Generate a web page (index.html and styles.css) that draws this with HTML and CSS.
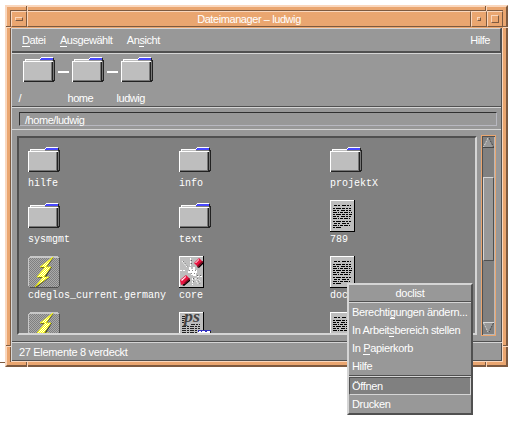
FILE: index.html
```html
<!DOCTYPE html>
<html lang="de">
<head>
<meta charset="utf-8">
<title>Dateimanager – ludwig</title>
<link rel="stylesheet" href="styles.css">
</head>
<body>
<svg class="defs" aria-hidden="true">
  <defs>
    <pattern id="dither" width="2" height="2" patternUnits="userSpaceOnUse">
      <path fill="#a9a9a9" d="M0 0h2v2H0z"/><path fill="#808080" d="M0 0h1v1H0zM1 1h1v1H1z"/>
    </pattern>
    <pattern id="spark" width="2" height="2" patternUnits="userSpaceOnUse">
      <path fill="#ffff00" d="M0 0h2v2H0z"/><path fill="#fff" d="M0 0h1v1H0zM1 1h1v1H1z"/>
    </pattern>
    <symbol id="folder" viewBox="0 0 32 25">
      <path fill="#222" d="M30 3h2v21h-1v1H1v-1h29z"/>
      <path fill="#777" d="M29 3h1v21h-1zM30 4h1v19h-1z"/>
      <path fill="#bebebe" d="M2 3h15v1H2zM1 5h28v18H1z"/>
      <path fill="#4848ff" d="M18 1h12v2H17v-1h1z"/>
      <path fill="#222" d="M30 1h1v2h-1z"/>
      <path fill="#fff" d="M18 0h12v1H18zM17 1h1v1h-1zM2 2h15v1H2zM2 3h1v1H2zM0 4h30v1H0zM0 5h1v20H0z"/>
      <path fill="#777" d="M28 5h1v19h-1zM1 23h28v1H1z"/>
      <path fill="#222" d="M29 5h1v20h-1zM1 24h29v1H1z"/>
    </symbol>
    <symbol id="doc" viewBox="0 0 25 32">
      <path fill="#000" d="M0 0h25v32H0z"/><path fill="#fff" d="M0 0h24v31H0z"/><path fill="#bebebe" d="M1 1h23v30H1z"/>
      <g stroke="#000" stroke-width="1">
        <path stroke-dasharray="3 1 2 2 4 1 2 1" d="M4 5.500h17M3 10.500h18M3 16.500h18M4 23.500h16"/>
        <path stroke-dasharray="2 1 5 1 3 1" d="M3 8.500h18M3 14.500h19M3 21.500h18M3 27.500h8"/>
        <path stroke-dasharray="4 1 1 1 3 1" d="M3 12.500h19M3 18.500h17M3 25.500h17"/>
      </g>
    </symbol>
    <symbol id="bolt" viewBox="0 0 32 32">
      <path fill="#505050" d="M2 1h29v1h1v28h-1v1h-1v1H2v-1H1V2h1z"/>
      <path fill="#c8c8c8" d="M2 0h28v1h1v1H1v28H0V2h1V1h1z"/>
      <path fill="url(#dither)" d="M1 2h30v28h-1v1H1z"/>
      <path fill="#333" d="M26 1l-7 10h5l-6 10h4L9 31h-2l8-9h-5l6-10h-4z"/>
      <path fill="url(#spark)" stroke="#ffff00" stroke-width=".6" d="M25 1L12 11h5L9 21h6L7 31l14-10h-5l7-10h-5z"/>
    </symbol>
    <symbol id="core" viewBox="0 0 25 32">
      <path fill="#000" d="M0 0h25v32H0z"/><path fill="#fff" d="M0 0h24v31H0z"/><path fill="#bebebe" d="M1 1h23v30H1z"/>
      <path stroke="#fff" stroke-dasharray="2 1" d="M11.500 2v8M3 5l5 6M1 14.500h6M18 20.500h5M17 22l5 4M13.500 22v7M16 22l3 6"/>
      <path stroke="#666" stroke-dasharray="1 2" d="M4 5l5 6M12.500 4v5M18 19.500h5M14.500 22v6M18 22l3 6"/>
      <path fill="#fff" d="M10 11h2v2h2v-2h2v3h2v3h-1v3h-3v-1h-2v-2H9v-2h2v-1h-1z"/>
      <path stroke="#888" stroke-dasharray="1 2" d="M10 14.500h7M12 17.500h5"/>
      <path fill="#000" d="M18 11l6-6v3l-4 4zM3 29l8-6v2l-6 5z"/>
      <path fill="#e8133f" d="M15 7l5-5 4 4-5 5zM1 24l6-5 4 4-6 5-3 1z"/>
      <path fill="#fff" d="M16 7l4-4v1l-3 3zM2 24l5-4v1l-4 4z"/>
      <path fill="#7a0c20" d="M18 10l5-5 1 1-5 5zM5 27l5-5 1 1-5 5z"/>
    </symbol>
    <symbol id="ps" viewBox="0 0 33 32">
      <path fill="#000" d="M0 0h25v32H0z"/><path fill="#fff" d="M0 0h24v31H0z"/><path fill="#bebebe" d="M1 1h23v30H1z"/>
      <path stroke="#222" stroke-dasharray="4 1 2 1" d="M3 4.500h3M3 6.500h3M3 8.500h2M3 10.500h2M12 12.500h9M3 14.500h18M3 16.500h18M3 18.500h16M3 20.500h15"/>
      <text x="5" y="10" class="ps-mark" textLength="16" lengthAdjust="spacingAndGlyphs">ps</text>
      <path fill="#3030c0" d="M19 18h13v4H19z"/><path fill="#fff" d="M20 19h2v1h-2zM23 19h3v1h-3zM28 19h3v1h-3zM19 20h12v2H19z"/><path fill="#222" d="M31 19h1v3h-1z"/>
    </symbol>
  </defs>
</svg>

<div class="desktop">
  <div class="window">
    <header class="titlebar">
      <div class="tbtn"><i class="bar"></i></div>
      <h1>Dateimanager – ludwig</h1>
      <div class="tbtn"><i class="dot"></i></div>
      <div class="tbtn"><i class="box"></i></div>
    </header>
    <main class="client">
      <nav class="menubar">
        <span><u>D</u>atei</span><span><u>A</u>usgewählt</span><span>An<u>s</u>icht</span><span class="help">Hilfe</span>
      </nav>
      <section class="path">
        <div class="node"><svg class="folder"><use href="#folder"/></svg><span>/</span></div>
        <div class="node"><svg class="folder"><use href="#folder"/></svg><span>home</span></div>
        <div class="node"><svg class="folder"><use href="#folder"/></svg><span>ludwig</span></div>
      </section>
      <section class="address"><div class="field">/home/ludwig</div></section>
      <section class="body">
        <div class="files">
          <div class="file"><svg class="folder"><use href="#folder"/></svg><span>hilfe</span></div>
          <div class="file"><svg class="folder"><use href="#folder"/></svg><span>info</span></div>
          <div class="file"><svg class="folder"><use href="#folder"/></svg><span>projektX</span></div>
          <div class="file"><svg class="folder"><use href="#folder"/></svg><span>sysmgmt</span></div>
          <div class="file"><svg class="folder"><use href="#folder"/></svg><span>text</span></div>
          <div class="file"><svg class="sheet"><use href="#doc"/></svg><span>789</span></div>
          <div class="file"><svg class="tile"><use href="#bolt"/></svg><span>cdeglos_current.germany</span></div>
          <div class="file"><svg class="sheet"><use href="#core"/></svg><span>core</span></div>
          <div class="file"><svg class="sheet"><use href="#doc"/></svg><span>doclist</span></div>
          <div class="file"><svg class="tile"><use href="#bolt"/></svg></div>
          <div class="file"><svg class="wide"><use href="#ps"/></svg></div>
          <div class="file"><svg class="sheet"><use href="#doc"/></svg></div>
        </div>
        <div class="scroll">
          <svg class="arrow" viewBox="0 0 11 11"><path fill="#989898" d="M5.500 0L11 11H0z"/><path stroke="#d8d8d8" stroke-dasharray="2 1" d="M5 1L.5 10"/><path stroke="#444" stroke-dasharray="2 1" d="M6 1l4.500 9"/><path stroke="#444" d="M0 10.500h11"/></svg>
          <div class="thumb"></div>
          <svg class="arrow" viewBox="0 0 11 11"><path fill="#989898" d="M0 0h11L5.500 11z"/><path stroke="#d8d8d8" stroke-dasharray="2 1" d="M.5 1L5 10"/><path stroke="#444" stroke-dasharray="2 1" d="M10.500 1L6 10"/><path stroke="#d8d8d8" d="M0 .5h11"/></svg>
        </div>
      </section>
      <footer class="status">27 Elemente 8 verdeckt</footer>
    </main>
    <i class="notch v top left"></i><i class="notch v top right"></i>
    <i class="notch v bottom left"></i><i class="notch v bottom right"></i>
    <i class="notch h west up"></i><i class="notch h east up"></i>
    <i class="notch h west down"></i><i class="notch h east down"></i>
  </div>
  <i class="stray"></i>
  <div class="popup">
    <div class="ptitle">doclist</div>
    <div class="item">Berechti<u>g</u>ungen ändern...</div>
    <div class="item">In Arbeit<u>s</u>bereich stellen</div>
    <div class="item">In <u>P</u>apierkorb</div>
    <div class="item">Hilfe</div>
    <div class="rule"></div>
    <div class="item active">Öffnen</div>
    <div class="item">Drucken</div>
  </div>
</div>
</body>
</html>
```
FILE: styles.css
```css
* { box-sizing: border-box; }
body {
  margin: 0;
  background: #fff;
  color: #fff;
  font: 11px/14px "Liberation Sans", sans-serif;
  letter-spacing: -.45px;
}
.defs { position: absolute; width: 0; height: 0; }
svg { display: block; }
.desktop { position: relative; width: 515px; height: 425px; padding: 5px; overflow: hidden; }
.window {
  position: relative;
  width: 503px;
  height: 362px;
  padding: 3px;
  background: #eaa670;
  border: 2px solid;
  border-color: #fad7bd #7d5a40 #7d5a40 #fad7bd;
  display: flex;
  flex-direction: column;
}
.titlebar {
  display: flex;
  height: 18px;
  border-top: 1px solid #7d5a40;
  border-left: 1px solid #7d5a40;
}
.tbtn, .titlebar h1 {
  margin: 0;
  height: 16px;
  border: 1px solid;
  border-color: #fad7bd #7d5a40 #7d5a40 #fad7bd;
}
.tbtn { width: 16px; display: flex; align-items: center; justify-content: center; }
.tbtn i { border: 1px solid; border-color: #fad7bd #7d5a40 #7d5a40 #fad7bd; }
.bar { width: 8px; height: 4px; }
.dot { width: 4px; height: 4px; }
.box { width: 8px; height: 8px; }
.titlebar h1 { flex: 1; text-align: center; font: inherit; line-height: 15px; letter-spacing: -.42px; }
.client {
  flex: 1;
  min-height: 0;
  display: flex;
  flex-direction: column;
  background: #989898;
  border-left: 1px solid #d5d5d5;
  border-right: 1px solid #fad7bd;
  border-bottom: 1px solid #fad7bd;
  box-shadow: inset -1px -1px #505050, -1px 0 #7d5a40;
  margin-left: 1px;
}
.menubar {
  display: flex;
  height: 25px;
  margin-right: 1px;
  padding: 4px 10px 0 10px;
  gap: 14.5px;
  border: solid;
  border-width: 1px 1px 2px 0;
  border-color: #d5d5d5 #505050 #505050;
}
.help { margin-left: auto; }
u { text-decoration: none; border-bottom: 1px solid #fff; }
.menubar u { display: inline-block; height: 14px; }
.path {
  display: flex;
  height: 55px;
  padding: 3px 0 0 7px;
  border-top: 1px solid #d5d5d5;
  border-bottom: 1px solid #505050;
  margin-right: 1px;
}
.node { position: relative; width: 49px; }
.node svg { margin-left: 4px; }
.node span { display: block; margin: 9px 0 0 -.5px; }
.node + .node::before { content: ""; position: absolute; left: -10px; top: 14px; width: 11px; height: 2px; background: #fff; }
.folder { width: 32px; height: 25px; }
.address { height: 22px; padding: 4px 4px 0 7px; border-top: 1px solid #d5d5d5; margin-right: 1px; }
.field {
  height: 14px;
  padding-left: 5px;
  line-height: 14px;
  border: 1px solid;
  border-color: #303030 #b8b8c0 #b8b8c0 #303030;
}
.body {
  display: flex;
  height: 213px;
  gap: 4px;
  padding: 5px;
  border-top: 1px solid #d5d5d5;
  border-bottom: 1px solid #505050;
  margin-right: 1px;
}
.files {
  width: 460px;
  height: 199px;
  margin-top: 1px;
  padding: 6px 0 0 9px;
  display: grid;
  grid-template-columns: repeat(3, 151px);
  grid-auto-rows: 56px;
  overflow: hidden;
  background: #808080;
  border: 2px solid;
  border-color: #505050 #d5d5d5 #d5d5d5 #505050;
  font: 10px/12px "Liberation Mono", monospace;
  letter-spacing: 0;
}
.file .folder { margin: 3px 0 4px; }
.sheet { width: 25px; height: 32px; }
.tile { width: 32px; height: 32px; }
.wide { width: 33px; height: 32px; }
.ps-mark { font: italic bold 17px "Liberation Serif", serif; fill: #444; letter-spacing: 0; }
.file span { display: block; padding-top: 2px; white-space: nowrap; }
.scroll {
  width: 15px;
  height: 201px;
  padding: 0 1px 0 0;
  background: #808080;
  border: 1px solid #eaa670;
  box-shadow: inset 1px 1px #505050, inset -1px -1px #b8b8b8;
  display: flex;
  flex-direction: column;
  align-items: center;
}
.arrow { width: 11px; height: 11px; margin: 1px 0 0 1px; flex: none; }
.thumb {
  width: 11px;
  height: 84px;
  margin: 29px 0 60px 1px;
  background: #989898;
  border: 1px solid;
  border-color: #d5d5d5 #505050 #505050 #d5d5d5;
}
.status { flex: 1; padding: 2px 7px; border-top: 1px solid #d5d5d5; letter-spacing: -.32px; }
.notch { position: absolute; background: #7d5a40; }
.v { width: 1px; height: 5px; box-shadow: 1px 0 #fad7bd; }
.h { height: 1px; width: 5px; box-shadow: 0 1px #fad7bd; }
.top { top: -1px; }
.bottom { bottom: -2px; }
.left { left: 19px; }
.right { right: 20px; }
.west { left: -1px; }
.east { right: -2px; }
.up { top: 19px; }
.down { bottom: 19px; }
.stray { position: absolute; left: 0; top: 362px; width: 5px; height: 1px; background: #7d5a40; }
.popup {
  position: absolute;
  left: 347px;
  top: 283px;
  width: 126px;
  height: 132px;
  background: #989898;
  border: 2px solid;
  border-color: #d5d5d5 #505050 #505050 #d5d5d5;
  letter-spacing: -.34px;
}
.ptitle {
  height: 17px;
  margin-bottom: 1px;
  line-height: 17px;
  text-align: center;
  border-bottom: 1px solid #505050;
  box-shadow: 0 1px #d5d5d5;
}
.item { height: 18px; padding-left: 3px; line-height: 18px; white-space: nowrap; }
.item u { display: inline-block; height: 16px; vertical-align: top; }
.rule { height: 2px; border-top: 1px solid #505050; border-bottom: 1px solid #d5d5d5; }
.active { padding-left: 2px; line-height: 16px; background: #808080; border: 1px solid; border-color: #505050 #d5d5d5 #d5d5d5 #505050; }
```
